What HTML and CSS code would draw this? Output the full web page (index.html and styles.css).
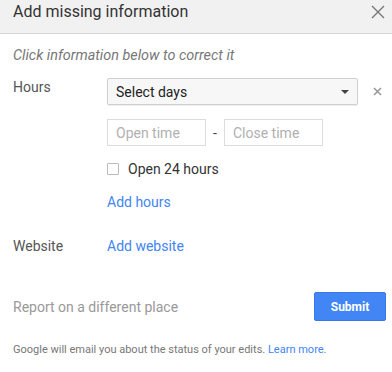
FILE: index.html
```html
<!DOCTYPE html>
<html lang="en">
<head>
  <meta charset="UTF-8" />
  <title>Add missing information</title>
  <link rel="stylesheet" href="styles.css">
</head>
<body>
  <div class="dialog">
    <header class="dialog-head">
      <h1>Add missing information</h1>
      <button class="close-btn" aria-label="Close">
        <svg width="14" height="14" viewBox="0 0 14 14"><path d="M1 1L13 13M13 1L1 13" stroke="#777" stroke-width="1.4" fill="none"/></svg>
      </button>
    </header>

    <div class="dialog-body">
      <p class="hint">Click information below to correct it</p>

      <div class="row hours-row">
        <div class="label">Hours</div>
        <div class="field">
          <div class="select-line">
            <div class="select">
              <span>Select days</span>
              <span class="caret"></span>
            </div>
            <span class="remove">
              <svg width="9" height="9" viewBox="0 0 9 9"><path d="M1 1L8 8M8 1L1 8" stroke="#999" stroke-width="1.6" fill="none"/></svg>
            </span>
          </div>
          <div class="times">
            <input type="text" placeholder="Open time" />
            <span class="dash">-</span>
            <input type="text" placeholder="Close time" />
          </div>
          <label class="check"><span class="box"></span>Open 24 hours</label>
          <a class="link add-hours" href="#">Add hours</a>
        </div>
      </div>

      <div class="row website-row">
        <div class="label">Website</div>
        <div class="field"><a class="link" href="#">Add website</a></div>
      </div>

      <div class="actions">
        <a class="other-place" href="#">Report on a different place</a>
        <button class="submit">Submit</button>
      </div>

      <p class="footnote">Google will email you about the status of your edits. <a class="link" href="#">Learn more</a>.</p>
    </div>
  </div>
</body>
</html>
```

FILE: styles.css
```css
body {
  margin: 0;
  font-family: Roboto, 'Noto Sans', sans-serif;
  background: #fff;
  color: #333;
}

.dialog {
  width: 392px;
}

.dialog-head {
  display: flex;
  align-items: flex-start;
  justify-content: space-between;
  height: 34px;
  padding: 2px 7px 0 13px;
  background: #f1f1f1;
  border-bottom: 1px solid #d6d6d6;
  box-sizing: border-box;
}

.dialog-head h1 {
  margin: 0;
  font-size: 16px;
  font-weight: 400;
  color: #333;
  line-height: 20px;
}

.close-btn {
  background: none;
  border: none;
  padding: 0;
  width: 14px;
  height: 14px;
  margin-top: 3px;
  cursor: pointer;
}

.close-btn svg {
  display: block;
}

.dialog-body {
  padding: 0 6px 0 13px;
}

.hint {
  margin: 13px 0 12px;
  font-size: 14.4px;
  font-style: italic;
  color: #777;
  line-height: 18px;
}

.row {
  display: flex;
}

.label {
  width: 94px;
  font-size: 14px;
  color: #555;
  line-height: 20px;
}

.field {
  display: flex;
  flex-direction: column;
  align-items: flex-start;
}

.select-line {
  display: flex;
  align-items: center;
  margin-top: 1px;
}

.select {
  width: 251px;
  height: 27px;
  box-sizing: border-box;
  display: flex;
  align-items: center;
  justify-content: space-between;
  padding: 0 8px;
  background: #f7f7f7;
  border: 1px solid #d0d0d0;
  border-radius: 2px;
  box-shadow: 0 1px 1px rgba(0,0,0,0.08);
  font-size: 14px;
  color: #222;
}

.caret {
  width: 0;
  height: 0;
  border-left: 4px solid transparent;
  border-right: 4px solid transparent;
  border-top: 4px solid #444;
}

.remove {
  display: flex;
  margin-left: 15px;
}

.times {
  display: flex;
  align-items: center;
  margin-top: 14px;
}

.times input {
  width: 99px;
  height: 27px;
  box-sizing: border-box;
  border: 1px solid #dcdcdc;
  padding: 0 8px;
  font-family: inherit;
  font-size: 14px;
  outline: none;
}

.times input::placeholder {
  color: #b0b0b0;
}

.dash {
  width: 18px;
  text-align: center;
  font-size: 14px;
  color: #444;
}

.check {
  display: flex;
  align-items: center;
  margin-top: 13px;
  font-size: 14px;
  color: #333;
  line-height: 20px;
}

.box {
  width: 10px;
  height: 10px;
  border: 1px solid #bbb;
  border-radius: 1px;
  margin-right: 9px;
}

.link {
  color: #4285f4;
  text-decoration: none;
}

.add-hours {
  margin-top: 13px;
  font-size: 14px;
  line-height: 20px;
}

.website-row {
  margin-top: 24px;
}

.website-row .link {
  font-size: 14px;
  line-height: 20px;
}

.actions {
  display: flex;
  align-items: center;
  justify-content: space-between;
  margin-top: 36px;
}

.other-place {
  color: #999;
  font-size: 14px;
  text-decoration: none;
}

.submit {
  width: 72px;
  height: 29px;
  background: #4285f4;
  border: 1px solid #3b78e7;
  border-radius: 2px;
  color: #fff;
  font-family: inherit;
  font-size: 12px;
  font-weight: 700;
  cursor: pointer;
}

.footnote {
  margin: 22px 0 0;
  font-size: 11px;
  color: #777;
}
```
